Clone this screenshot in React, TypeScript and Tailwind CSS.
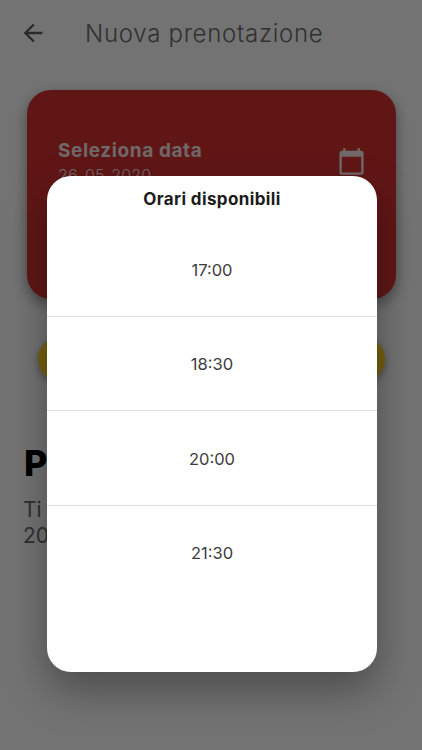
import { MdArrowBack, MdCalendarToday } from 'react-icons/md'

const slots = ['17:00', '18:30', '20:00', '21:30']

function BookingPage() {
  return (
    <div className="h-full bg-[#fbfbfb]">
      <header className="flex h-[66px] items-center pl-[19px]">
        <MdArrowBack className="h-7 w-7 text-[#5c5c5c]" />
        <h1 className="ml-[38px] whitespace-nowrap pt-px text-[24px] font-light tracking-[0.72px] text-[#6a6a6a]">
          Nuova prenotazione
        </h1>
      </header>

      <section className="mx-[27px] mt-6 flex h-[209px] w-[369px] items-start justify-between rounded-[24px] bg-[#d33131] pl-[31px] pr-[30px] pt-[49px] shadow-[0_5px_14px_rgba(0,0,0,0.4)]">
        <div className="whitespace-nowrap text-[#f4e4e4]">
          <h2 className="text-[19px] font-bold leading-6 tracking-[0.6px]">Seleziona data</h2>
          <p className="text-[16px] font-light leading-6 tracking-[0.1px]">26-05-2020</p>
        </div>
        <MdCalendarToday className="mt-[8px] h-[29px] w-[29px] text-[#f4e4e4]" />
      </section>

      <button className="mx-[38px] mt-[38px] block h-[44px] w-[347px] rounded-full bg-[#ffd21f] shadow-[0_3px_8px_rgba(0,0,0,0.35)]" />

      <section className="mt-[60px] whitespace-nowrap pl-[24px]">
        <h2 className="text-[36px] font-extrabold leading-[44px] text-black">P</h2>
        <p className="-ml-px mt-[12px] text-[21px] leading-[26px] text-[#6a6a6a]">
          Ti
          <br />
          20
        </p>
      </section>
    </div>
  )
}

function SlotsDialog() {
  return (
    <div className="absolute inset-0 bg-black/54 pl-[47px] pt-[176px]">
      <div className="h-[496px] w-[330px] rounded-[24px] bg-white shadow-[0_18px_40px_rgba(0,0,0,0.34)]">
        <h3 className="flex h-[46.5px] items-center justify-center pt-px text-[17px] font-bold tracking-[0.38px] text-[#1c1c1c]">
          Orari disponibili
        </h3>
        <ul className="divide-y divide-[#dedede]">
          {slots.map((slot) => (
            <li
              key={slot}
              className="flex h-[94.4px] items-center justify-center pt-[2px] text-[16.5px] text-[#3c3c3c]"
            >
              {slot}
            </li>
          ))}
        </ul>
      </div>
    </div>
  )
}

export default function App() {
  return (
    <main className="relative h-[750px] w-[422px] overflow-hidden font-['Inter',sans-serif]">
      <BookingPage />
      <SlotsDialog />
    </main>
  )
}
